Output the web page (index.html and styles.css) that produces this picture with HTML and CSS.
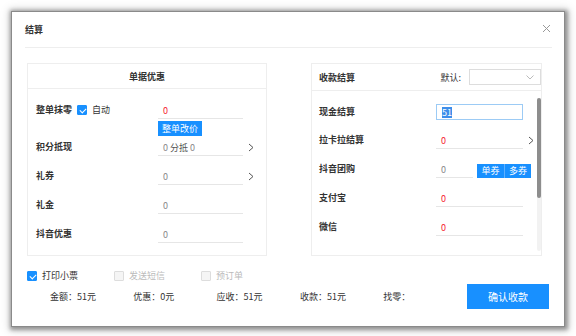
FILE: index.html
```html
<!DOCTYPE html>
<html lang="zh">
<head>
  <meta charset="UTF-8">
  <meta name="viewport" content="width=device-width, initial-scale=1.0">
  <title>结算</title>
  <link rel="stylesheet" href="styles.css">
</head>
<body>
  <div class="dialog">
    <div class="dlg-head">
      <span class="dlg-title">结算</span>
      <svg class="close" width="9" height="9" viewBox="0 0 9 9"><path d="M1 1L8 8M8 1L1 8" stroke="#999" stroke-width="1" fill="none"/></svg>
    </div>

    <div class="panels">
      <section class="panel panel-left">
        <div class="panel-head">单据优惠</div>
        <div class="panel-body">
          <div class="row">
            <div class="label">整单抹零 <span class="check on"></span> <span class="plain">自动</span></div>
            <div class="field-col">
              <div class="field red">0</div>
              <button class="btn-sm">整单改价</button>
            </div>
          </div>
          <div class="row row-after-btn">
            <div class="label">积分抵现</div>
            <div class="field-col"><div class="field gray">0 <span class="dark">分抵</span> 0</div></div>
            <svg class="arrow" width="6" height="9" viewBox="0 0 6 9"><path d="M1 1L5 4.5L1 8" stroke="#555" fill="none"/></svg>
          </div>
          <div class="row">
            <div class="label">礼券</div>
            <div class="field-col"><div class="field gray">0</div></div>
            <svg class="arrow" width="6" height="9" viewBox="0 0 6 9"><path d="M1 1L5 4.5L1 8" stroke="#555" fill="none"/></svg>
          </div>
          <div class="row">
            <div class="label">礼金</div>
            <div class="field-col"><div class="field gray">0</div></div>
          </div>
          <div class="row">
            <div class="label">抖音优惠</div>
            <div class="field-col"><div class="field gray">0</div></div>
          </div>
        </div>
      </section>

      <section class="panel panel-right">
        <div class="panel-head">
          <span class="head-title">收款结算</span>
          <span class="head-label">默认:</span>
          <div class="select">
            <svg width="8" height="5" viewBox="0 0 8 5"><path d="M0.5 0.5L4 4L7.5 0.5" stroke="#bbb" fill="none"/></svg>
          </div>
        </div>
        <div class="panel-body">
          <div class="rows">
            <div class="row">
              <div class="label">现金结算</div>
              <div class="input-box"><span class="sel">51</span></div>
            </div>
            <div class="row">
              <div class="label">拉卡拉结算</div>
              <div class="field-col"><div class="field red">0</div></div>
              <svg class="arrow" width="6" height="9" viewBox="0 0 6 9"><path d="M1 1L5 4.5L1 8" stroke="#555" fill="none"/></svg>
            </div>
            <div class="row">
              <div class="label">抖音团购</div>
              <div class="field-col short"><div class="field gray">0</div></div>
              <div class="btn-group"><button>单券</button><button>多券</button></div>
            </div>
            <div class="row">
              <div class="label">支付宝</div>
              <div class="field-col"><div class="field red">0</div></div>
            </div>
            <div class="row">
              <div class="label">微信</div>
              <div class="field-col"><div class="field red">0</div></div>
            </div>
          </div>
          <div class="scrollbar"><div class="thumb"></div></div>
        </div>
      </section>
    </div>

    <div class="opts">
      <label class="opt"><span class="check on"></span>打印小票</label>
      <label class="opt off"><span class="check"></span>发送短信</label>
      <label class="opt off"><span class="check"></span>预订单</label>
    </div>

    <div class="footer">
      <span class="sum">金额：51元</span>
      <span class="sum">优惠：0元</span>
      <span class="sum">应收：51元</span>
      <span class="sum">收款：51元</span>
      <span class="sum">找零：</span>
      <button class="btn-main">确认收款</button>
    </div>
  </div>
</body>
</html>
```

FILE: styles.css
```css
body { margin: 0; background: #fff; font-family: "Noto Sans CJK SC", "Noto Sans", sans-serif; font-size: 9px; color: #333; }
.dialog { margin: 12px; width: 552px; height: 314px; background: #fff; box-shadow: 0 0 0 1px #8a8a8a, 1px 1px 4px 3px rgba(0,0,0,0.35), 1px 1px 9px 4px rgba(0,0,0,0.15); }

.dlg-head { margin: 0 12px 0 13px; height: 35px; border-bottom: 1px solid #eee; display: flex; align-items: center; justify-content: space-between; }
.dlg-title { font-weight: bold; font-size: 9px; color: #333; }
.close { margin-right: 1px; margin-top: -2px; }

.panels { display: flex; margin: 15px 0 0 15px; height: 193px; }
.panel { border: 1px solid #eee; box-sizing: border-box; height: 193px; }
.panel-left { width: 240px; }
.panel-right { width: 231px; margin-left: 44px; }
.panel-head { height: 24px; border-bottom: 1px solid #eee; display: flex; align-items: center; justify-content: center; font-weight: bold; }
.panel-right .panel-head { height: 26px; justify-content: flex-start; padding-left: 7px; font-weight: normal; }
.head-title { flex: 1; font-weight: bold; }
.head-label { margin-right: 8px; }
.select { width: 72px; height: 16px; border: 1px solid #ddd; box-sizing: border-box; display: flex; align-items: center; justify-content: flex-end; padding-right: 6px; }

.panel-body { padding: 13px 0 0 8px; display: flex; flex-direction: column; }
.panel-left .row { margin-top: 12px; }
.panel-left .row:first-child { margin-top: 0; }
.panel-left .row-after-btn { margin-top: 3px; }
.row { display: flex; align-items: flex-start; }
.label { width: 122px; line-height: 16px; font-weight: bold; display: flex; align-items: center; }
.plain { font-weight: normal; margin-left: 5px; }
.label .check { margin-left: 5px; }
.field-col { width: 85px; }
.field { height: 16px; line-height: 17px; border-bottom: 1px solid #e6e6e6; padding-left: 5px; }
.red { color: #f5222d; }
.gray { color: #888; }
.dark { color: #555; }
.arrow { margin: 4px 0 0 5px; }
.btn-sm { margin-top: 2px; height: 15px; padding: 0 4px; border: none; background: #1890ff; color: #fff; font-family: inherit; font-size: 9px; line-height: 15px; display: block; }

.panel-right .panel-body { flex-direction: row; padding: 13px 0 0 7px; }
.rows { display: flex; flex-direction: column; gap: 12px; flex: 1; }
.panel-right .label { width: 117px; }
.panel-right .field-col { width: 87px; }
.field-col.short { width: 37px; }
.input-box { width: 87px; height: 16px; border: 1px solid #9ccbf5; box-sizing: border-box; padding-left: 5px; display: flex; align-items: center; }
.sel { background: #3c8eea; color: #fff; line-height: 11px; }
.btn-group { display: flex; margin: 3px 0 0 4px; }
.btn-group button { width: 27px; height: 14px; padding: 0; border: none; background: #1890ff; color: #fff; font-family: inherit; font-size: 9px; line-height: 14px; }
.btn-group button + button { border-left: 1px solid #5eb0ff; }
.scrollbar { width: 4px; margin-top: -6px; height: 153px; background: #f2f2f2; border-radius: 2px; }
.thumb { height: 100px; background: #8d8d8d; border-radius: 2px; }

.opts { display: flex; margin: 15px 0 0 15px; height: 10px; }
.opt { width: 87px; display: flex; align-items: center; line-height: 10px; }
.opt .check { margin-right: 5px; }
.opt.off { color: #bbb; }
.check { display: inline-block; width: 10px; height: 10px; box-sizing: border-box; border: 1px solid #ddd; background: #f5f5f5; border-radius: 1px; position: relative; }
.check.on { background: #1890ff; border-color: #1890ff; }
.check.on::after { content: ""; position: absolute; left: 2.5px; top: 0.5px; width: 3px; height: 5px; border: solid #fff; border-width: 0 1px 1px 0; transform: rotate(45deg); }

.footer { display: flex; align-items: center; margin: 3px 15px 0 38px; height: 25px; }
.sum { width: 83.3px; }
.btn-main { margin-left: auto; width: 82px; height: 25px; border: none; background: #1890ff; color: #fff; font-family: inherit; font-size: 10px; }
```
